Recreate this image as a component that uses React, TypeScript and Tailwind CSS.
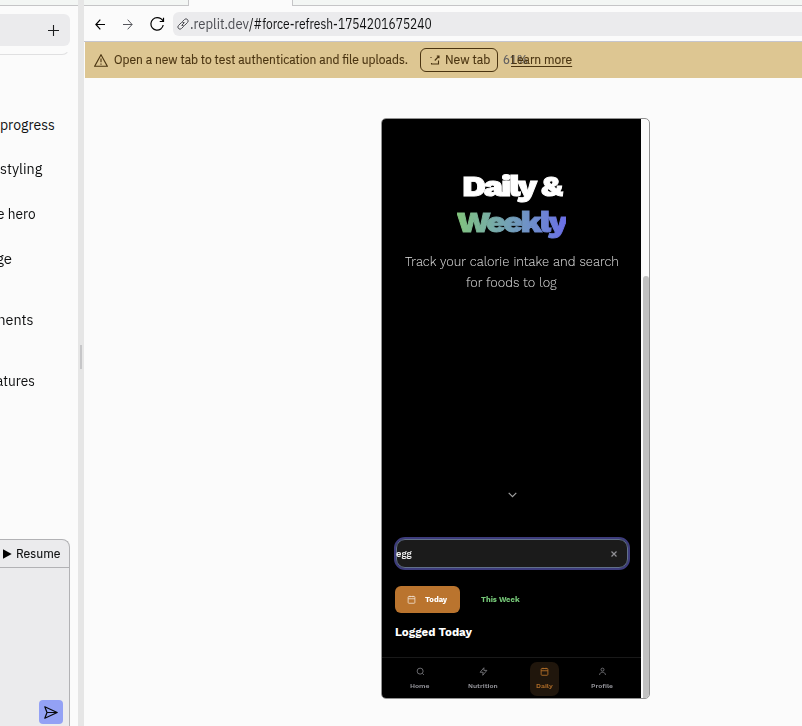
import { useLayoutEffect, useRef, useState } from "react";
import type { ReactNode } from "react";

/* One line of text, condensed or stretched to a given width. */
function Fit({ w, className = "", children }: { w: number; className?: string; children: ReactNode }) {
  const ref = useRef<HTMLSpanElement>(null);
  const [scale, setScale] = useState(1);
  useLayoutEffect(() => {
    if (ref.current) setScale(w / ref.current.offsetWidth);
  }, [w]);
  return (
    <span className="block shrink-0 whitespace-nowrap" style={{ width: w }}>
      <span ref={ref} className={"inline-block origin-left " + className} style={{ transform: `scaleX(${scale})` }}>
        {children}
      </span>
    </span>
  );
}

function Sidebar() {
  const row = "flex h-5 justify-end text-[14px] leading-5 text-[#0f1011]";
  return (
    <aside className="flex h-full w-[78px] shrink-0 flex-col overflow-hidden">
      <div className="h-[6px] shrink-0 border-b border-[#c5c5c7] bg-[#f3f6f4]" />
      <div className="h-[49px] w-[70px] shrink-0 rounded-br-lg border-r border-b border-[#e0e0e1] border-r-transparent pt-2">
        <div className="flex h-8 w-[70px] items-center justify-end rounded-r-md bg-[#ebebed] pr-[11px]">
          <svg width="11" height="11" viewBox="0 0 11 11" stroke="#1b1c1e" strokeWidth="1.1">
            <path d="M5.5 0v11M0 5.5h11" />
          </svg>
        </div>
      </div>
      <div className="flex flex-col">
        <div className={row + " mt-[60px] pr-[23px]"}><Fit w={55}>progress</Fit></div>
        <div className={row + " mt-6 pr-[36px]"}><Fit w={42}>styling</Fit></div>
        <div className={row + " mt-[25px] pr-[42px]"}><Fit w={39}>e hero</Fit></div>
        <div className={row + " mt-[25px] pr-[66px]"}><Fit w={16}>ge</Fit></div>
        <div className={row + " mt-[41px] pr-[44px]"}><Fit w={41}>ments</Fit></div>
        <div className={row + " mt-[41px] pr-[43px]"}><Fit w={39}>atures</Fit></div>
      </div>
      <div className="mt-[148px] flex w-[70px] flex-1 flex-col rounded-tr-[8px] border-t border-r border-[#b2b2b5] bg-[#ebebed]">
        <div className="flex h-[28px] shrink-0 items-center border-b border-[#b2b2b5] pl-[3px] text-[13px] text-[#0f1011]">
          <svg width="9" height="10" viewBox="0 0 9 10"><path d="M0 .3 8.7 5 0 9.7z" fill="#000" /></svg>
          <span className="ml-[4px] [-webkit-text-stroke:0.150px_#0f1011]"><Fit w={44}>Resume</Fit></span>
        </div>
        <div className="mt-auto mr-[6px] mb-[2px] flex size-6 items-center justify-center self-end rounded bg-[#93a1f5]">
          <svg width="14" height="13" viewBox="0 0 14 13" fill="none" stroke="#08090d" strokeWidth="1.2" strokeLinejoin="round">
            <path d="M.8.8 13.2 6.5.8 12.2 3 6.5zM3 6.5h9" />
          </svg>
        </div>
      </div>
    </aside>
  );
}

function TabStrip() {
  return (
    <div className="flex h-[6px] shrink-0">
      <div className="w-[105px] border-r border-b border-[#c5c5c7] bg-[#f3f6f4]" />
      <div className="w-[103px]" />
      <div className="flex-1 border-b border-l border-[#c5c5c7] bg-[#f3f6f4]" />
    </div>
  );
}

function AddressBar() {
  return (
    <div className="flex h-[36px] shrink-0 items-center border-b border-[#c5c5ce]">
      <svg className="mt-px ml-[11px]" width="10" height="11" viewBox="0 0 10 11" fill="none" stroke="#000" strokeWidth="1.2">
        <path d="M5.3.7.9 5.5l4.4 4.8M.9 5.5H10" />
      </svg>
      <svg className="mt-px ml-[18px]" width="10" height="11" viewBox="0 0 10 11" fill="none" stroke="#55565c" strokeWidth="1">
        <path d="m4.7.7 4.4 4.8-4.4 4.8M9.1 5.5H0" />
      </svg>
      <svg className="mt-px ml-[17px]" width="15" height="14" viewBox="0 0 15 14" fill="none" stroke="#000" strokeWidth="1.2">
        <path d="M13.500 .7v3.800H9.700M13.200 4.300C11.900 2 10 .7 7.200 .7A6.200 6.200 0 1 0 13.200 8" />
      </svg>
      <div className="ml-[8px] flex h-6 flex-1 items-center rounded-l-md bg-[#ebebed] pl-[4px] text-[14px]">
        <svg width="12" height="12" viewBox="0 0 24 24" fill="none" stroke="#4c4d53" strokeWidth="2">
          <path d="M9 15l6-6M10.500 7.500l4.500-4.500a4.200 4.200 0 0 1 6 6l-5.500 5.500a4.200 4.200 0 0 1-5.500 0M13.500 16.500l-4.500 4.500a4.200 4.200 0 0 1-6-6l5.500-5.500a4.200 4.200 0 0 1 5.500 0" />
        </svg>
        <span className="mt-px ml-[1px] text-[#4c4d53]"><Fit w={59}>.replit.dev</Fit></span>
        <span className="mt-px text-[#0f1011]"><Fit w={183}>/#force-refresh-1754201675240</Fit></span>
      </div>
    </div>
  );
}

function Banner() {
  return (
    <div className="ml-px flex h-[36px] shrink-0 items-center bg-[#ddc692] text-[13px] text-[#4a3411] [-webkit-text-stroke:0.150px_#4a3411]">
      <svg className="ml-[9px]" width="14" height="13" viewBox="0 0 14 13" fill="none" stroke="#4a3411" strokeWidth="1.1">
        <path d="M7 .8.700 12.200h12.600zM7 4.500v3.700M7 9.500v1.200" />
      </svg>
      <span className="ml-[6px]"><Fit w={294}>Open a new tab to test authentication and file uploads.</Fit></span>
      <div className="ml-[12px] flex h-6 w-[78px] items-center rounded-md border border-[#4a3411] pl-[9px]">
        <svg width="10" height="10" viewBox="0 0 10 10" fill="none" stroke="#4a3411" strokeWidth="1.1">
          <path d="M6.800 1h2.200v2.200M9 1 4.800 5.500M1 3V2M1 9h7.500V5.500M1.500 8V9" />
        </svg>
        <span className="ml-[5px]"><Fit w={45}>New tab</Fit></span>
      </div>
      <div className="relative ml-[13px]">
        <span className="absolute top-0 -left-[8px] text-[#5b5a5e] [-webkit-text-stroke:0.150px_#5b5a5e]"><Fit w={25}>61%</Fit></span>
        <Fit w={61} className="underline underline-offset-2">Learn more</Fit>
      </div>
    </div>
  );
}

function SearchBox() {
  return (
    <div className="mt-[39px] ml-[12px] flex h-[33px] w-[236px] shrink-0 items-center rounded-[11px] border-2 border-[#3d3c7c] bg-[#1b1b1b]">
      <div className="flex h-full w-full items-center justify-between rounded-[9px] border border-[#61708a] pr-[10px] text-[10.500px] font-semibold text-[#f0f0f0]">
        <span className="-ml-px"><Fit w={16}>egg</Fit></span>
        <svg width="6" height="6" viewBox="0 0 6 6" stroke="#909095" strokeWidth="1.200"><path d="m.5.500 5 5M5.500.500l-5 5" /></svg>
      </div>
    </div>
  );
}

const CALENDAR = "M8 2v4M16 2v4M3 10h18M5 4h14a2 2 0 0 1 2 2v14a2 2 0 0 1-2 2H5a2 2 0 0 1-2-2V6a2 2 0 0 1 2-2z";

function NavItem({ label, w, path, active = false, className }: { label: string; w: number; path: string; active?: boolean; className: string }) {
  return (
    <div className={"flex h-[34px] shrink-0 flex-col items-center rounded-[7px] pt-[5px] " + (active ? "bg-[#20160c] text-[#b06d28] " : "text-[#77777c] ") + className}>
      <svg width="9" height="9" viewBox="0 0 24 24" fill="none" stroke="currentColor" strokeWidth="2.400"><path d={path} /></svg>
      <span className={"mt-[5px] text-[6.500px] leading-[10px] font-semibold " + (active ? "" : "text-[#96969c]")}><Fit w={w}>{label}</Fit></span>
    </div>
  );
}

function Phone() {
  return (
    <div className="mt-[40px] ml-[297px] flex h-[581px] w-[269px] shrink-0 overflow-hidden rounded-[5px] border border-[#929292] bg-[#fbfbfb] font-['Work_Sans','Inter',sans-serif]">
      <div className="flex w-[259px] shrink-0 flex-col bg-black">
        <h1 className="mt-[49px] flex flex-col items-center text-[30px] leading-[36px] font-extrabold text-white">
          <Fit w={99} className="tracking-[-1.800px] [-webkit-text-stroke:0.900px_white]">Daily &amp;</Fit>
          <Fit w={109} className="bg-gradient-to-r from-[#82c47c] to-[#6b6ee6] bg-clip-text tracking-[-1.800px] text-transparent [-webkit-text-stroke:0.900px_transparent]">Weekly</Fit>
        </h1>
        <div className="mt-[11px] flex flex-col items-center text-[13px] leading-[21px] font-light text-[#e2e2e2]">
          <Fit w={214}>Track your calorie intake and search</Fit>
          <Fit w={91}>for foods to log</Fit>
        </div>
        <svg className="mt-[199px] ml-[126px] shrink-0" width="9" height="6" viewBox="0 0 9 6" fill="none" stroke="#a0a0a0" strokeWidth="1.200"><path d="m.7.900 3.800 3.700L8.300.900" /></svg>
        <SearchBox />
        <div className="mt-[16px] ml-[13px] flex h-[27px] shrink-0 items-center text-[8px] font-bold">
          <div className="flex h-[27px] w-[65px] items-center rounded-[6px] bg-[#ba742e] pl-[12px] text-white">
            <svg width="9" height="9" viewBox="0 0 24 24" fill="none" stroke="#f5e9dc" strokeWidth="2"><path d={CALENDAR} /></svg>
            <span className="ml-[9px]"><Fit w={22}>Today</Fit></span>
          </div>
          <span className="ml-[21px] text-[#75c777]"><Fit w={39}>This Week</Fit></span>
        </div>
        <h2 className="mt-[11px] ml-[13px] text-[11.500px] leading-4 font-bold text-white"><Fit w={77}>Logged Today</Fit></h2>
        <nav className="mt-auto flex h-[41px] shrink-0 items-start border-t border-[#191919] pt-[4px]">
          <NavItem className="ml-[23px] w-[30px]" label="Home" w={20} path="M21 21l-4-4M19 11a8 8 0 1 1-16 0 8 8 0 0 1 16 0z" />
          <NavItem className="ml-[28px] w-[40px]" label="Nutrition" w={30} path="M13 2 3 14h8l-1 8 11-13h-8z" />
          <NavItem active className="ml-[27px] w-[29px]" label="Daily" w={17} path={CALENDAR} />
          <NavItem className="ml-[27px] w-[32px]" label="Profile" w={22} path="M16 7a4 4 0 1 1-8 0 4 4 0 0 1 8 0zM4 21c1-5 4-7 8-7s7 2 8 7" />
        </nav>
      </div>
      <div className="flex flex-1 flex-col items-end">
        <div className="mt-[157px] w-[6px] flex-1 rounded-t-full bg-[#c1c1c1]" />
      </div>
    </div>
  );
}

export default function App() {
  return (
    <div className="flex h-[726px] w-[802px] overflow-hidden bg-[#fbfbfb] font-['IBM_Plex_Sans','Roboto',sans-serif]">
      <Sidebar />
      <div className="flex w-[6px] shrink-0 items-center justify-end bg-[#e6e6e6]">
        <div className="mr-[2px] mb-[12px] h-6 w-[2px] bg-[#c6c6c8]" />
      </div>
      <main className="flex flex-1 flex-col overflow-hidden">
        <TabStrip />
        <AddressBar />
        <Banner />
        <Phone />
      </main>
    </div>
  );
}
